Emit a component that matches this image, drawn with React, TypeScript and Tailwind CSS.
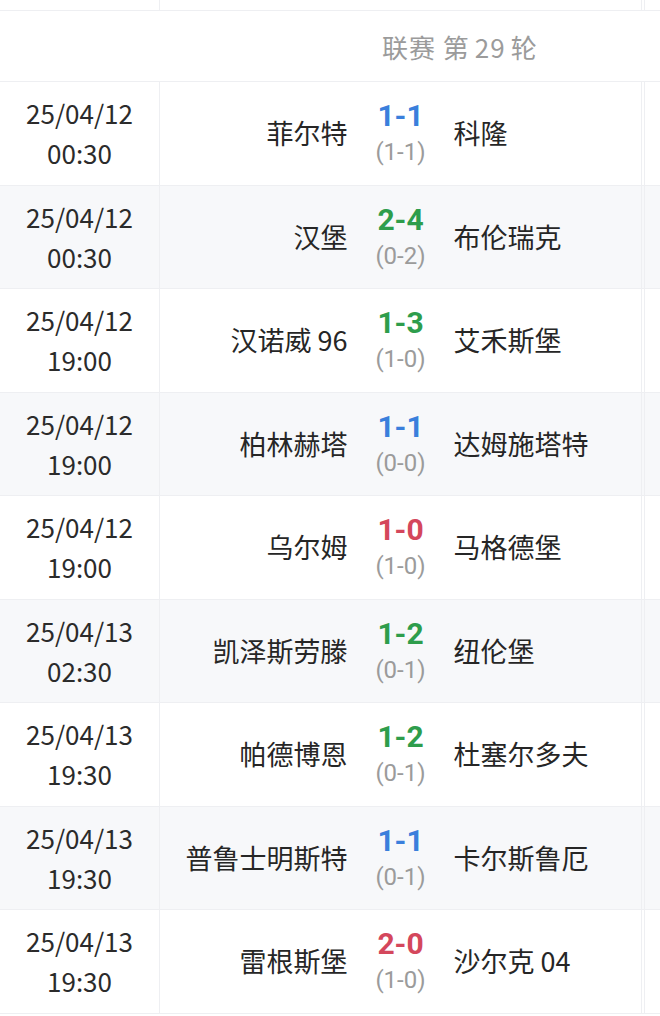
import React from 'react';

type Match = {
  date: string;
  time: string;
  home: string;
  away: string;
  score: string;
  half: string;
  result: 'draw' | 'away' | 'home';
};

const matches: Match[] = [
  { date: '25/04/12', time: '00:30', home: '菲尔特', away: '科隆', score: '1-1', half: '(1-1)', result: 'draw' },
  { date: '25/04/12', time: '00:30', home: '汉堡', away: '布伦瑞克', score: '2-4', half: '(0-2)', result: 'away' },
  { date: '25/04/12', time: '19:00', home: '汉诺威 96', away: '艾禾斯堡', score: '1-3', half: '(1-0)', result: 'away' },
  { date: '25/04/12', time: '19:00', home: '柏林赫塔', away: '达姆施塔特', score: '1-1', half: '(0-0)', result: 'draw' },
  { date: '25/04/12', time: '19:00', home: '乌尔姆', away: '马格德堡', score: '1-0', half: '(1-0)', result: 'home' },
  { date: '25/04/13', time: '02:30', home: '凯泽斯劳滕', away: '纽伦堡', score: '1-2', half: '(0-1)', result: 'away' },
  { date: '25/04/13', time: '19:30', home: '帕德博恩', away: '杜塞尔多夫', score: '1-2', half: '(0-1)', result: 'away' },
  { date: '25/04/13', time: '19:30', home: '普鲁士明斯特', away: '卡尔斯鲁厄', score: '1-1', half: '(0-1)', result: 'draw' },
  { date: '25/04/13', time: '19:30', home: '雷根斯堡', away: '沙尔克 04', score: '2-0', half: '(1-0)', result: 'home' },
];

const scoreColor = {
  draw: 'text-[#3a7fdc]',
  away: 'text-[#2e9d4c]',
  home: 'text-[#d4475c]',
};

const App: React.FC = () => {
  return (
    <div className="w-[660px] h-[1016px] overflow-hidden bg-white font-['Noto_Sans_CJK_SC','Noto_Sans',sans-serif] text-[#262626]">
      {/* tail of previous row */}
      <div className="flex h-[11px] border-b border-[#eeeff2]">
        <div className="w-[160px] border-r border-[#eeeff2]" />
        <div className="w-[482px] border-r border-[#eeeff2]" />
        <div className="flex-1 ml-[2px] border-l border-[#eeeff2]" />
      </div>

      {/* round header */}
      <div className="flex items-center h-[71px] border-b border-[#eeeff2] pl-[382px]">
        <span className="text-[26px] text-[#9b9b9b] tracking-[1px]">
          联赛 第<span className="mx-[5px]">29</span>轮
        </span>
      </div>

      {matches.map((m, i) => (
        <div
          key={i}
          className={`flex h-[103.5px] border-b border-[#eeeff2] ${i % 2 === 1 ? 'bg-[#f7f8fa]' : 'bg-white'}`}
        >
          <div className="w-[160px] border-r border-[#eeeff2] flex flex-col items-center justify-center text-[26px] leading-[40px] text-[#2b2b2b]">
            <span>{m.date}</span>
            <span>{m.time}</span>
          </div>
          <div className="w-[482px] border-r border-[#eeeff2] flex items-center">
            <div className="flex-1 text-right text-[27px] text-[#262626]">{m.home}</div>
            <div className="w-[106px] flex flex-col items-center gap-[6px] font-['Roboto',sans-serif]">
              <span className={`text-[30px] leading-[32px] font-bold ${scoreColor[m.result]}`}>{m.score}</span>
              <span className="text-[24px] leading-[28px] text-[#9b9b9b]">{m.half}</span>
            </div>
            <div className="flex-1 text-left text-[27px] text-[#262626]">{m.away}</div>
          </div>
          <div className="flex-1 ml-[2px] border-l border-[#eeeff2]" />
        </div>
      ))}
    </div>
  );
};

export default App;
